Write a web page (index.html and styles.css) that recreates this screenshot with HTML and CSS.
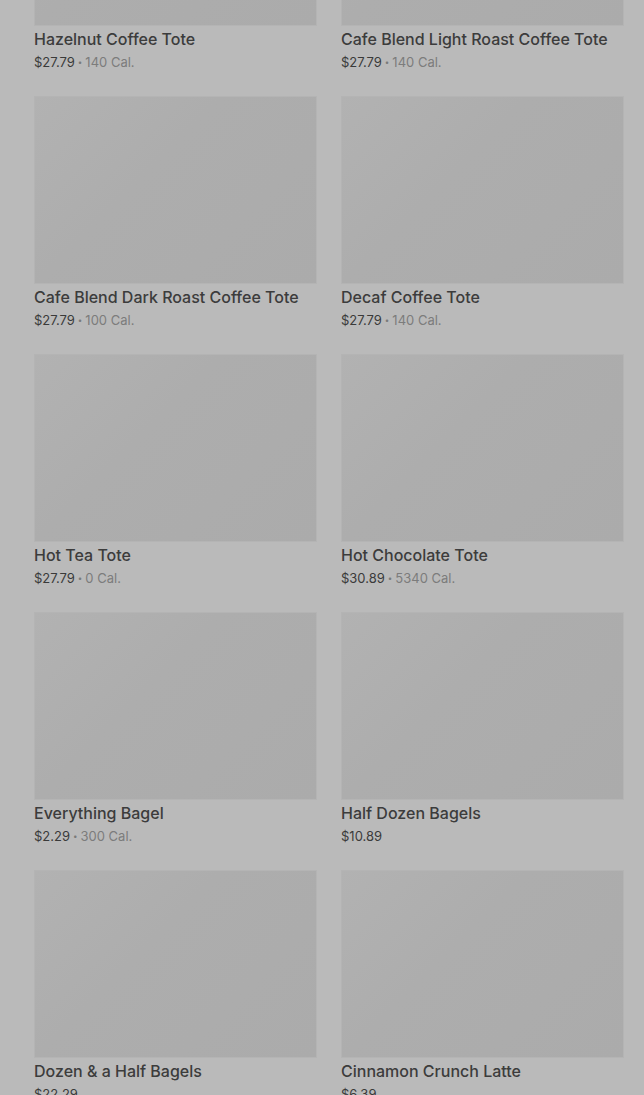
FILE: index.html
```html
<!DOCTYPE html>
<html lang="en">
<head>
    <meta charset="UTF-8">
    <meta name="viewport" content="width=device-width, initial-scale=1.0">
    <title>Menu</title>
    <link rel="stylesheet" href="styles.css">
</head>
<body>
    <div class="menu">
        <div class="grid">
            <div class="card">
                <div class="thumb"></div>
                <div class="name">Hazelnut Coffee Tote</div>
                <div class="meta"><span class="price">$27.79</span><span class="dot">•</span><span class="cal">140 Cal.</span></div>
            </div>
            <div class="card">
                <div class="thumb"></div>
                <div class="name">Cafe Blend Light Roast Coffee Tote</div>
                <div class="meta"><span class="price">$27.79</span><span class="dot">•</span><span class="cal">140 Cal.</span></div>
            </div>
            <div class="card">
                <div class="thumb"></div>
                <div class="name">Cafe Blend Dark Roast Coffee Tote</div>
                <div class="meta"><span class="price">$27.79</span><span class="dot">•</span><span class="cal">100 Cal.</span></div>
            </div>
            <div class="card">
                <div class="thumb"></div>
                <div class="name">Decaf Coffee Tote</div>
                <div class="meta"><span class="price">$27.79</span><span class="dot">•</span><span class="cal">140 Cal.</span></div>
            </div>
            <div class="card">
                <div class="thumb"></div>
                <div class="name">Hot Tea Tote</div>
                <div class="meta"><span class="price">$27.79</span><span class="dot">•</span><span class="cal">0 Cal.</span></div>
            </div>
            <div class="card">
                <div class="thumb"></div>
                <div class="name">Hot Chocolate Tote</div>
                <div class="meta"><span class="price">$30.89</span><span class="dot">•</span><span class="cal">5340 Cal.</span></div>
            </div>
            <div class="card">
                <div class="thumb"></div>
                <div class="name">Everything Bagel</div>
                <div class="meta"><span class="price">$2.29</span><span class="dot">•</span><span class="cal">300 Cal.</span></div>
            </div>
            <div class="card">
                <div class="thumb"></div>
                <div class="name">Half Dozen Bagels</div>
                <div class="meta"><span class="price">$10.89</span></div>
            </div>
            <div class="card">
                <div class="thumb"></div>
                <div class="name">Dozen &amp; a Half Bagels</div>
                <div class="meta"><span class="price">$22.29</span></div>
            </div>
            <div class="card">
                <div class="thumb"></div>
                <div class="name">Cinnamon Crunch Latte</div>
                <div class="meta"><span class="price">$6.39</span></div>
            </div>
        </div>
    </div>
</body>
</html>
```

FILE: styles.css
```css
body {
    margin: 0;
    background-color: #bababa;
    font-family: Inter, "Noto Sans", sans-serif;
    overflow: hidden;
    height: 1095px;
}
.menu {
    padding: 0 20px 0 34px;
    margin-top: -162px;
}
.grid {
    display: grid;
    grid-template-columns: 1fr 1fr;
    gap: 24px;
}
.card {
    min-width: 0;
}
.thumb {
    height: 188px;
    background: linear-gradient(135deg, #b2b2b2 0%, #adadad 40%, #ababab 100%);
    box-shadow: inset 0 0 0 1px #b4b4b4;
}
.name {
    margin-top: 2px;
    line-height: 22px;
    font-size: 16px;
    font-weight: 500;
    color: #3c3c3c;
    white-space: nowrap;
}
.meta {
    display: flex;
    align-items: center;
    height: 20px;
    margin-top: 2px;
    font-size: 13px;
    color: #3a3a3a;
}
.dot {
    margin: 0 3px;
    font-size: 8px;
    color: #7a7a7a;
}
.cal {
    color: #7c7c7c;
}
```
